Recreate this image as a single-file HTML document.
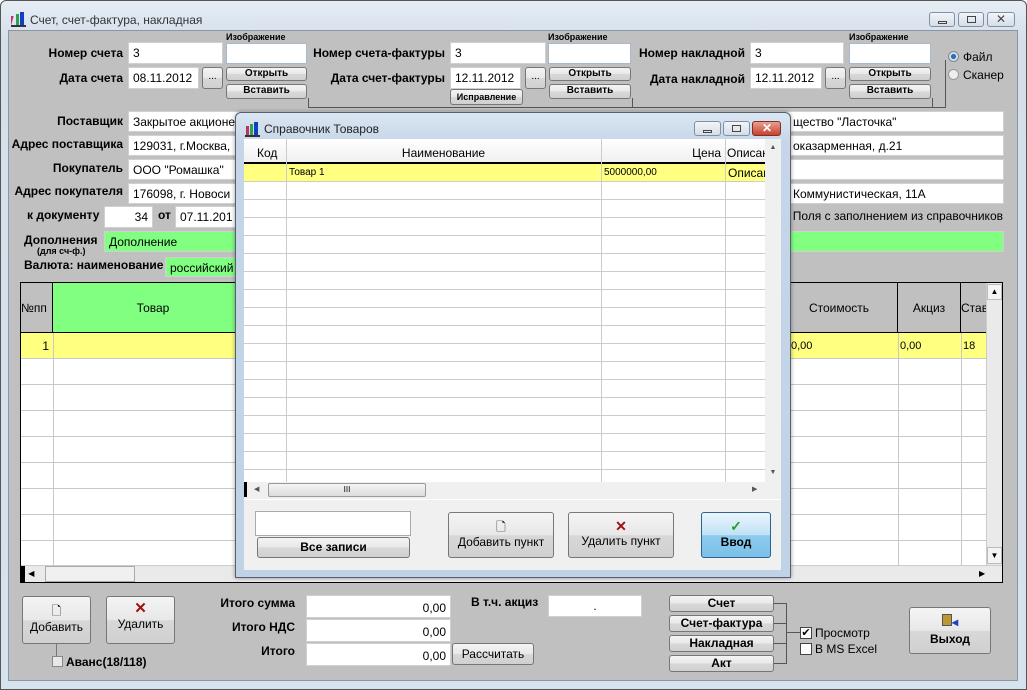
<!DOCTYPE html>
<html><head><meta charset="utf-8">
<style>
*{box-sizing:border-box;margin:0;padding:0}
body{width:1027px;height:690px;overflow:hidden;background:#fff;font-family:"Liberation Sans",sans-serif;font-size:12px;color:#000;position:relative}
.a{position:absolute}
.frame{left:0;top:0;width:1027px;height:690px;background:linear-gradient(#e6edf5,#d4dfea 40px,#d6e2ee);border:1px solid #555;border-radius:6px 6px 0 0}
.body{left:8px;top:30px;width:1010px;height:651px;background:#c0c0c0;border:1px solid #8a96a4}
.lb{position:absolute;font-weight:bold;font-size:12px;white-space:nowrap;text-align:right}
.in{position:absolute;background:#fff;border:1px solid #d0d0d0;font-size:12px;padding:3px 4px;white-space:nowrap;overflow:hidden;line-height:14px}
.g{background:#80ff80}
.bt{position:absolute;background:linear-gradient(#f4f4f4,#e8e8e8 50%,#d8d8d8 51%,#d0d0d0);border:1px solid #777;border-radius:3px;font-size:10px;font-weight:bold;text-align:center;line-height:12px;white-space:nowrap}
.sm{font-size:9px;font-weight:bold;position:absolute}
.ln{position:absolute;background:#555}
.wb{position:absolute;height:15px;border:1px solid #8090a0;border-radius:3px;background:linear-gradient(#f2f5f9,#d5dde7)}
</style></head><body>
<div class="a frame"></div>
<svg class="a" style="left:11px;top:11px" width="16" height="16"><rect x="1" y="5" width="3" height="10" fill="#c03060" transform="skewX(-15)"/><rect x="5" y="3" width="3" height="12" fill="#30a050"/><rect x="9" y="1" width="4" height="14" fill="#1040c0"/><rect x="0" y="14" width="15" height="2" fill="#333"/></svg>
<div class="a" style="left:30px;top:13px;font-size:12px;color:#333">Счет, счет-фактура, накладная</div>
<div class="wb" style="left:929px;top:12px;width:26px"><div class="a" style="left:8px;top:8px;width:9px;height:3px;border:1px solid #444"></div></div>
<div class="wb" style="left:958px;top:12px;width:26px"><div class="a" style="left:8px;top:3px;width:9px;height:7px;border:1px solid #444"></div></div>
<div class="wb" style="left:987px;top:12px;width:28px"><div class="a" style="left:8px;top:-1px;font-size:12px;color:#444">✕</div></div>
<div class="a body"></div>

<div class="lb" style="left:20px;width:103px;top:46px">Номер счета</div>
<div class="in" style="left:128px;top:42px;width:95px;height:22px">3</div>
<div class="lb" style="left:20px;width:103px;top:71px">Дата счета</div>
<div class="in" style="left:128px;top:67px;width:71px;height:22px">08.11.2012</div>
<div class="bt" style="left:202px;top:67px;width:21px;height:22px;font-weight:normal;line-height:18px">...</div>
<div class="sm" style="left:226px;top:32px">Изображение</div>
<div class="in" style="left:226px;top:43px;width:81px;height:21px;border-color:#a8b8d0"></div>
<div class="bt" style="left:226px;top:67px;width:81px;height:14px">Открыть</div>
<div class="bt" style="left:226px;top:84px;width:81px;height:15px">Вставить</div>
<div class="ln" style="left:308px;top:98px;width:1px;height:10px"></div>
<div class="ln" style="left:308px;top:107px;width:637px;height:1px"></div>

<div class="lb" style="left:300px;width:145px;top:46px">Номер счета-фактуры</div>
<div class="in" style="left:450px;top:42px;width:96px;height:22px">3</div>
<div class="lb" style="left:300px;width:145px;top:71px">Дата счет-фактуры</div>
<div class="in" style="left:450px;top:67px;width:71px;height:22px">12.11.2012</div>
<div class="bt" style="left:525px;top:67px;width:21px;height:22px;font-weight:normal;line-height:18px">...</div>
<div class="bt" style="left:450px;top:89px;width:73px;height:16px;font-size:9px;line-height:14px">Исправление</div>
<div class="sm" style="left:548px;top:32px">Изображение</div>
<div class="in" style="left:548px;top:43px;width:83px;height:21px;border-color:#a8b8d0"></div>
<div class="bt" style="left:549px;top:67px;width:82px;height:14px">Открыть</div>
<div class="bt" style="left:549px;top:84px;width:82px;height:15px">Вставить</div>
<div class="ln" style="left:632px;top:98px;width:1px;height:10px"></div>

<div class="lb" style="left:620px;width:125px;top:46px">Номер накладной</div>
<div class="in" style="left:750px;top:42px;width:94px;height:22px">3</div>
<div class="lb" style="left:620px;width:125px;top:72px">Дата накладной</div>
<div class="in" style="left:750px;top:67px;width:72px;height:22px">12.11.2012</div>
<div class="bt" style="left:825px;top:67px;width:21px;height:22px;font-weight:normal;line-height:18px">...</div>
<div class="sm" style="left:849px;top:32px">Изображение</div>
<div class="in" style="left:849px;top:43px;width:82px;height:21px;border-color:#a8b8d0"></div>
<div class="bt" style="left:849px;top:67px;width:82px;height:14px">Открыть</div>
<div class="bt" style="left:849px;top:84px;width:82px;height:15px">Вставить</div>
<div class="ln" style="left:932px;top:98px;width:1px;height:10px"></div>
<div class="ln" style="left:945px;top:60px;width:1px;height:48px"></div>
<div class="a" style="left:948px;top:51px;width:11px;height:11px;border-radius:50%;background:radial-gradient(#2a6fb5 35%,#cfe0f0 45%);border:1px solid #888"></div>
<div class="a" style="left:963px;top:50px;font-size:12px">Файл</div>
<div class="a" style="left:948px;top:69px;width:11px;height:11px;border-radius:50%;background:#eee;border:1px solid #999"></div>
<div class="a" style="left:963px;top:68px;font-size:12px">Сканер</div>

<div class="lb" style="left:10px;width:113px;top:114px">Поставщик</div>
<div class="in" style="left:128px;top:111px;width:876px;height:21px">Закрытое акционе<span style="position:absolute;left:664px">щество "Ласточка"</span></div>
<div class="lb" style="left:10px;width:113px;top:137px">Адрес поставщика</div>
<div class="in" style="left:128px;top:135px;width:876px;height:21px">129031, г.Москва,<span style="position:absolute;left:664px">оказарменная, д.21</span></div>
<div class="lb" style="left:10px;width:113px;top:161px">Покупатель</div>
<div class="in" style="left:128px;top:159px;width:876px;height:21px">ООО "Ромашка"</div>
<div class="lb" style="left:10px;width:113px;top:184px">Адрес покупателя</div>
<div class="in" style="left:128px;top:183px;width:876px;height:21px">176098, г. Новоси<span style="position:absolute;left:664px">Коммунистическая, 11А</span></div>
<div class="lb" style="left:27px;top:208px">к документу</div>
<div class="in" style="left:104px;top:206px;width:49px;height:22px;text-align:right">34</div>
<div class="lb" style="left:158px;top:208px">от</div>
<div class="in" style="left:175px;top:206px;width:70px;height:22px">07.11.201</div>
<div class="a" style="left:780px;top:209px;width:223px;text-align:right;font-size:12px">Поля с заполнением из справочников</div>
<div class="lb" style="left:24px;width:73px;top:233px">Дополнения</div>
<div class="sm" style="left:37px;top:246px">(для сч-ф.)</div>
<div class="in g" style="left:104px;top:231px;width:900px;height:21px">Дополнение</div>
<div class="lb" style="left:24px;top:258px">Валюта: наименование</div>
<div class="in g" style="left:165px;top:257px;width:80px;height:20px">российский</div>

<div class="a" style="left:20px;top:282px;width:983px;height:301px;border:1px solid #000;background:#fff;overflow:hidden">
 <div class="a" style="left:0;top:0;width:32px;height:50px;background:#c0c0c0;border-right:1px solid #000;border-bottom:1px solid #000;font-size:12px;line-height:50px">№пп</div>
 <div class="a" style="left:32px;top:0;width:200px;height:50px;background:#80ff80;border-bottom:1px solid #000;text-align:center;line-height:50px;font-size:12px">Товар</div>
 <div class="a" style="left:760px;top:0;width:117px;height:50px;background:#c0c0c0;border-right:1px solid #000;border-bottom:1px solid #000;text-align:center;line-height:50px">Стоимость</div>
 <div class="a" style="left:877px;top:0;width:63px;height:50px;background:#c0c0c0;border-right:1px solid #000;border-bottom:1px solid #000;text-align:center;line-height:50px">Акциз</div>
 <div class="a" style="left:940px;top:0;width:25px;height:50px;background:#c0c0c0;border-bottom:1px solid #000;line-height:50px;overflow:hidden">Ставка</div>
 <div class="a" style="left:0;top:50px;width:965px;height:26px;background:#ffff80;border-bottom:1px solid #c8c8c8"></div>
 <div class="a" style="left:0;top:56px;width:28px;text-align:right">1</div>
 <div class="a" style="left:770px;top:57px;font-size:11px">0,00</div>
 <div class="a" style="left:879px;top:57px;font-size:11px">0,00</div>
 <div class="a" style="left:942px;top:57px;font-size:11px">18</div>
 <div class="a" style="left:0;top:76px;width:965px;height:206px;background:repeating-linear-gradient(#fff 0 25px,#c8c8c8 25px 26px)"></div>
 <div class="a" style="left:32px;top:50px;width:1px;height:232px;background:#c8c8c8"></div>
 <div class="a" style="left:877px;top:50px;width:1px;height:232px;background:#c8c8c8"></div>
 <div class="a" style="left:940px;top:50px;width:1px;height:232px;background:#c8c8c8"></div>
 <div class="a" style="left:965px;top:0;width:17px;height:283px;background:#eaeaea;border-left:1px solid #ccc"></div>
 <div class="a" style="left:966px;top:1px;width:15px;height:16px;background:#f4f4f4;border:1px solid #bbb;font-size:8px;text-align:center;line-height:14px">▲</div>
 <div class="a" style="left:966px;top:264px;width:15px;height:17px;background:#f4f4f4;border:1px solid #bbb;font-size:8px;text-align:center;line-height:15px">▼</div>
 <div class="a" style="left:0;top:282px;width:983px;height:18px;background:#eaeaea;border-top:1px solid #ccc"></div>
 <div class="a" style="left:0;top:283px;width:4px;height:17px;background:#000"></div>
 <div class="a" style="left:5px;top:283px;width:40px;height:16px;font-size:8px;line-height:16px">&nbsp;◀</div>
 <div class="a" style="left:24px;top:283px;width:90px;height:16px;background:#f0f0f0;border:1px solid #aaa"></div>
 <div class="a" style="left:958px;top:283px;font-size:8px;line-height:16px">▶</div>
</div>

<div class="a" style="left:235px;top:112px;width:556px;height:466px;border:1px solid #55606e;border-radius:6px 6px 0 0;background:linear-gradient(#dbe6f2,#c6d6e8 30px,#bfd2e6);box-shadow:0 0 4px rgba(0,0,0,.4)"></div>
<svg class="a" style="left:245px;top:121px" width="16" height="16"><rect x="1" y="5" width="3" height="10" fill="#c03060"/><rect x="5" y="3" width="3" height="12" fill="#30a050"/><rect x="9" y="1" width="4" height="14" fill="#1040c0"/><rect x="0" y="14" width="15" height="2" fill="#333"/></svg>
<div class="a" style="left:264px;top:122px;font-size:12px;color:#222">Справочник Товаров</div>
<div class="wb" style="left:694px;top:121px;width:27px"><div class="a" style="left:8px;top:8px;width:9px;height:3px;border:1px solid #444"></div></div>
<div class="wb" style="left:723px;top:121px;width:27px"><div class="a" style="left:8px;top:3px;width:9px;height:7px;border:1px solid #444"></div></div>
<div class="wb" style="left:752px;top:121px;width:29px;background:linear-gradient(#e8a090,#c84030);border-color:#803020"><div class="a" style="left:9px;top:-1px;font-size:12px;color:#fff;font-weight:bold">✕</div></div>

<div class="a" style="left:244px;top:139px;width:537px;height:361px;background:#fff;overflow:hidden">
 <div class="a" style="left:0;top:0;width:521px;height:25px;background:linear-gradient(#fff,#f0f0f0);border-bottom:2px solid #000"></div>
 <div class="a" style="left:13px;top:7px">Код</div>
 <div class="a" style="left:42px;top:7px;width:315px;text-align:center">Наименование</div>
 <div class="a" style="left:357px;top:7px;width:120px;text-align:right">Цена</div>
 <div class="a" style="left:483px;top:7px">Описание</div>
 <div class="a" style="left:0;top:25px;width:521px;height:18px;background:#ffff80;border-bottom:1px solid #ccc"></div>
 <div class="a" style="left:45px;top:28px;font-size:10px">Товар 1</div>
 <div class="a" style="left:360px;top:28px;font-size:10px">5000000,00</div>
 <div class="a" style="left:484px;top:27px;font-size:12px;width:37px;overflow:hidden">Описание</div>
 <div class="a" style="left:0;top:43px;width:521px;height:300px;background:repeating-linear-gradient(#fff 0 17px,#ccc 17px 18px)"></div>
 <div class="a" style="left:42px;top:0;width:1px;height:343px;background:#ccc"></div>
 <div class="a" style="left:357px;top:0;width:1px;height:343px;background:#ccc"></div>
 <div class="a" style="left:481px;top:0;width:1px;height:343px;background:#ccc"></div>
 <div class="a" style="left:521px;top:0;width:16px;height:343px;background:#f0f0f0"></div>
 <div class="a" style="left:521px;top:5px;width:16px;text-align:center;font-size:7px;color:#555">▲</div>
 <div class="a" style="left:521px;top:330px;width:16px;text-align:center;font-size:7px;color:#555">▼</div>
 <div class="a" style="left:0;top:343px;width:537px;height:17px;background:#f0f0f0"></div>
 <div class="a" style="left:0;top:343px;width:3px;height:15px;background:#000"></div>
 <div class="a" style="left:10px;top:346px;font-size:7px;color:#555">◀</div>
 <div class="a" style="left:24px;top:344px;width:158px;height:14px;background:linear-gradient(#f4f4f4,#dcdcdc);border:1px solid #999;border-radius:2px;text-align:center;font-size:8px;line-height:12px">III</div>
 <div class="a" style="left:508px;top:346px;font-size:7px;color:#555">▶</div>
</div>
<div class="a" style="left:244px;top:500px;width:537px;height:70px;background:#f0f0f0"></div>
<div class="in" style="left:255px;top:511px;width:156px;height:25px;border-color:#aaa"></div>
<div class="bt" style="left:257px;top:537px;width:153px;height:21px;font-size:12px;line-height:19px">Все записи</div>
<div class="bt" style="left:448px;top:512px;width:106px;height:46px;font-weight:normal;font-size:12px;padding-top:8px">🗋<br><span style="line-height:18px">Добавить пункт</span></div>
<div class="bt" style="left:568px;top:512px;width:106px;height:46px;font-weight:normal;font-size:12px;padding-top:7px"><span style="color:#a01010;font-size:14px;font-weight:bold">✕</span><br><span style="line-height:16px">Удалить пункт</span></div>
<div class="bt" style="left:701px;top:512px;width:70px;height:46px;background:linear-gradient(#eaf5fc,#bfe2f6 50%,#8ccbed 51%,#7bc0e8);border-color:#2c628b;font-size:12px;padding-top:7px"><span style="color:#2a9a2a;font-size:14px">✓</span><br><span style="line-height:18px">Ввод</span></div>

<div class="bt" style="left:22px;top:596px;width:69px;height:48px;font-weight:normal;font-size:12px;padding-top:8px">🗋<br><span style="line-height:20px">Добавить</span></div>
<div class="bt" style="left:106px;top:596px;width:69px;height:48px;font-weight:normal;font-size:12px;padding-top:6px"><span style="color:#a01010;font-size:15px;font-weight:bold">✕</span><br><span style="line-height:18px">Удалить</span></div>
<div class="ln" style="left:56px;top:644px;width:1px;height:12px;background:#777"></div>
<div class="a" style="left:52px;top:656px;width:11px;height:11px;background:#e8e8e8;border:1px solid #888"></div>
<div class="lb" style="left:66px;top:655px">Аванс(18/118)</div>
<div class="lb" style="left:200px;width:95px;top:596px">Итого сумма</div>
<div class="in" style="left:306px;top:595px;width:145px;height:23px;text-align:right;padding-top:5px">0,00</div>
<div class="lb" style="left:200px;width:95px;top:620px">Итого НДС</div>
<div class="in" style="left:306px;top:619px;width:145px;height:23px;text-align:right;padding-top:5px">0,00</div>
<div class="lb" style="left:200px;width:95px;top:644px">Итого</div>
<div class="in" style="left:306px;top:643px;width:145px;height:23px;text-align:right;padding-top:5px">0,00</div>
<div class="bt" style="left:452px;top:643px;width:82px;height:22px;font-weight:normal;font-size:12px;line-height:20px">Рассчитать</div>
<div class="lb" style="left:471px;top:595px">В т.ч. акциз</div>
<div class="in" style="left:548px;top:595px;width:94px;height:22px;text-align:center">.</div>
<div class="bt" style="left:669px;top:595px;width:105px;height:17px;font-size:12px;line-height:15px">Счет</div>
<div class="bt" style="left:669px;top:615px;width:105px;height:17px;font-size:12px;line-height:15px">Счет-фактура</div>
<div class="bt" style="left:669px;top:635px;width:105px;height:17px;font-size:12px;line-height:15px">Накладная</div>
<div class="bt" style="left:669px;top:655px;width:105px;height:17px;font-size:12px;line-height:15px">Акт</div>
<div class="ln" style="left:774px;top:603px;width:12px;height:1px"></div>
<div class="ln" style="left:774px;top:623px;width:12px;height:1px"></div>
<div class="ln" style="left:774px;top:643px;width:12px;height:1px"></div>
<div class="ln" style="left:774px;top:663px;width:12px;height:1px"></div>
<div class="ln" style="left:786px;top:603px;width:1px;height:61px"></div>
<div class="ln" style="left:786px;top:632px;width:14px;height:1px"></div>
<div class="a" style="left:800px;top:627px;width:12px;height:12px;background:#fff;border:1px solid #444;font-size:11px;line-height:10px;text-align:center">✔</div>
<div class="a" style="left:815px;top:626px;font-size:12px">Просмотр</div>
<div class="a" style="left:800px;top:643px;width:12px;height:12px;background:#fff;border:1px solid #444"></div>
<div class="a" style="left:815px;top:642px;font-size:12px">В MS Excel</div>
<div class="bt" style="left:909px;top:607px;width:82px;height:47px;font-size:12px;padding-top:6px"><span style="display:inline-block;width:10px;height:12px;background:#b89a30;border:1px solid #555"></span><span style="color:#2040c0">◂</span><br><span style="line-height:22px">Выход</span></div>
</body></html>
